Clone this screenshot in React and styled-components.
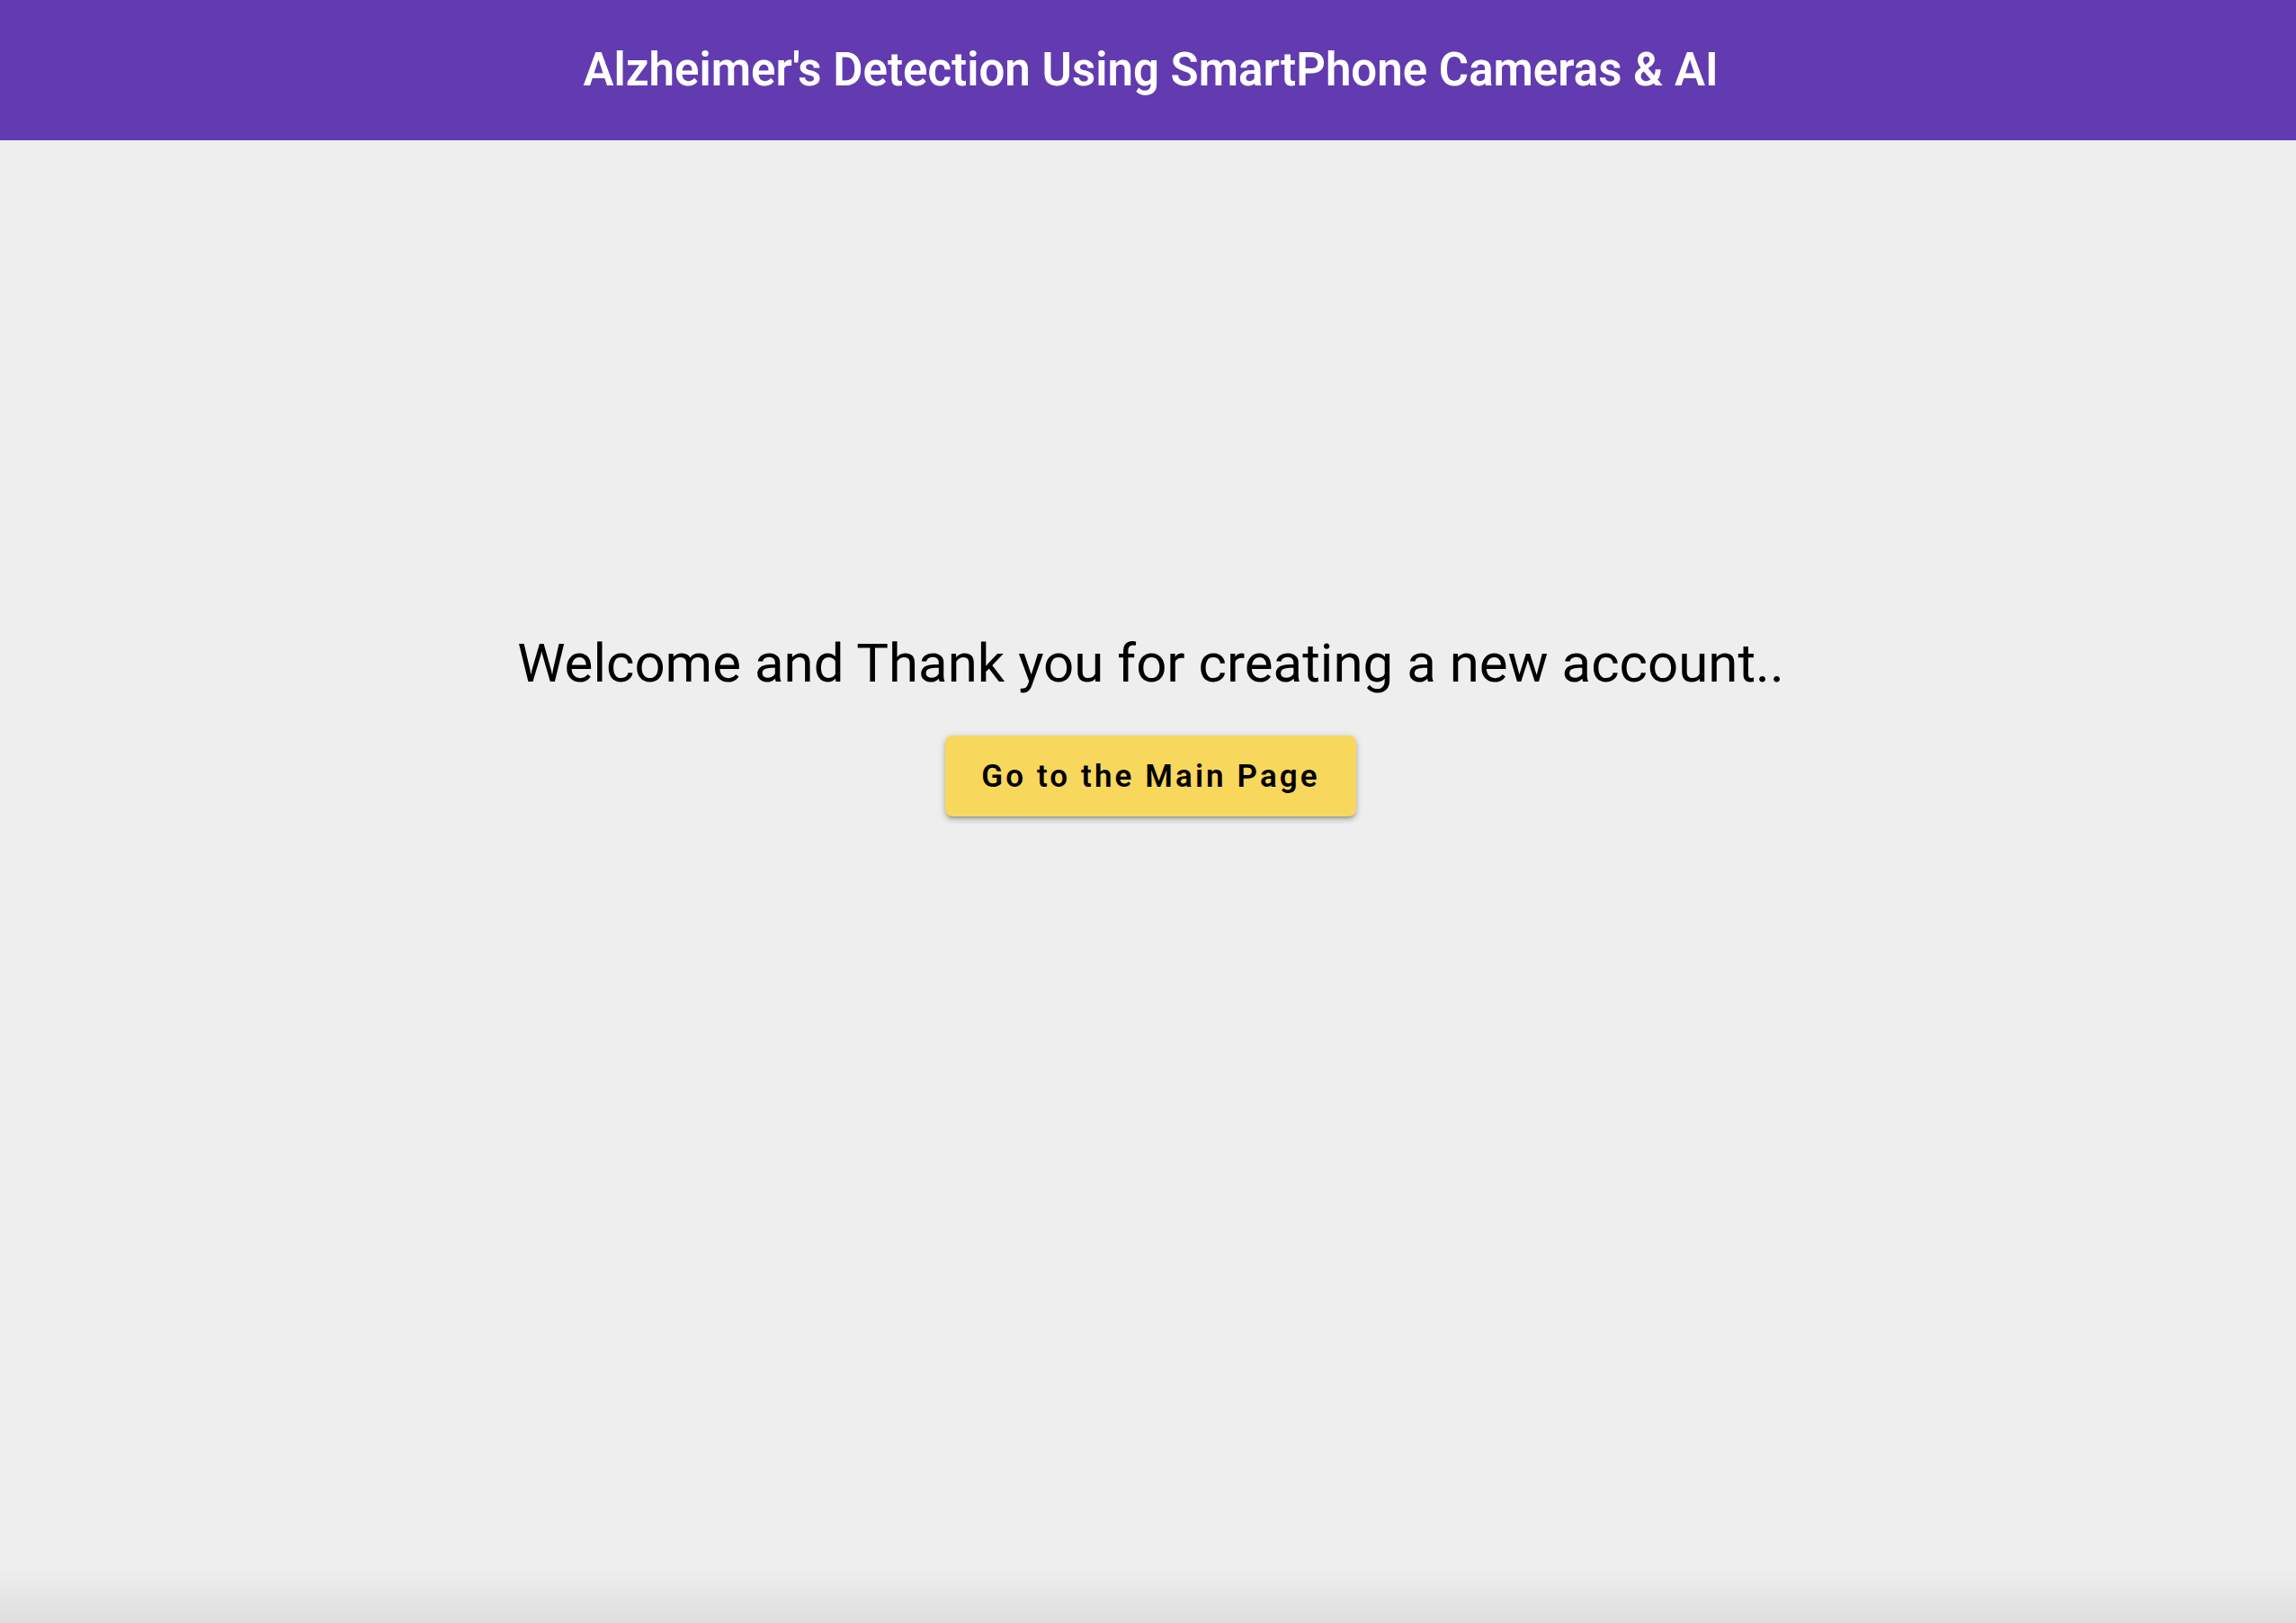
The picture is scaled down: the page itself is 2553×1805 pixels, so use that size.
import React from "react";
import styled, { createGlobalStyle } from "styled-components";

const Global = createGlobalStyle`
  html, body { margin: 0; padding: 0; }
  body {
    background: #eeeeee;
    font-family: Roboto, "Liberation Sans", Arial, sans-serif;
  }
`;

const Page = styled.div`
  min-height: 100vh;
  display: flex;
  flex-direction: column;
  padding-left: 6px;
  box-sizing: border-box;
  background: linear-gradient(to bottom, #eeeeee 0, #eeeeee calc(100% - 60px), #dedede 100%);
`;

const Header = styled.header`
  height: 156px;
  margin-left: -6px;
  padding-left: 6px;
  background: #623bb0;
  display: flex;
  align-items: center;
  justify-content: center;
  flex-shrink: 0;
`;

const Title = styled.h1`
  margin: 0;
  padding-bottom: 2px;
  color: #ffffff;
  font-size: 51px;
  font-weight: 600;
  line-height: 1;
  letter-spacing: 0;
`;

const Main = styled.main`
  flex: 1;
  display: flex;
  flex-direction: column;
  align-items: center;
  padding-top: 546px;
  gap: 44px;
`;

const Heading = styled.h2`
  margin: 0;
  font-size: 60px;
  font-weight: 400;
  line-height: 1.2;
  color: #000;
`;

const Button = styled.button`
  height: 90px;
  padding: 0 40px;
  border: none;
  border-radius: 8px;
  background: #f8d75d;
  color: #000;
  font-family: Roboto, "Liberation Sans", Arial, sans-serif;
  font-size: 35px;
  font-weight: 600;
  letter-spacing: 3.1px;
  display: inline-flex;
  align-items: center;
  justify-content: center;
  cursor: pointer;
  box-shadow: 0px 3px 3px -2px rgba(0,0,0,0.25), 0px 4px 6px 0px rgba(0,0,0,0.18), 0px 1px 8px 0px rgba(0,0,0,0.12);
`;

export default function App() {
  return (
    <>
      <Global />
      <Page>
        <Header>
          <Title>Alzheimer's Detection Using SmartPhone Cameras &amp; AI</Title>
        </Header>
        <Main>
          <Heading>Welcome and Thank you for creating a new account..</Heading>
          <Button>Go to the Main Page</Button>
        </Main>
      </Page>
    </>
  );
}
